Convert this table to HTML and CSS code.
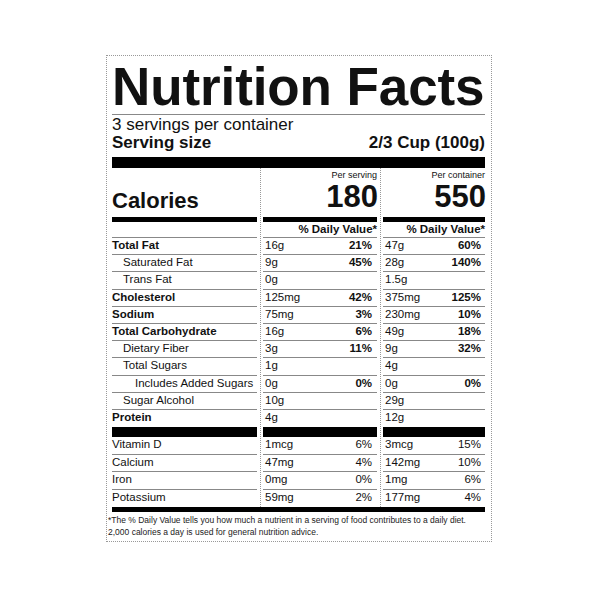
FILE: index.html
```html
<!DOCTYPE html>
<html lang="en">
<head>
  <meta charset="UTF-8">
  <title>Nutrition Facts</title>
  <link rel="stylesheet" href="styles.css">
</head>
<body>
<div class="label">
  <h1 class="title">Nutrition Facts</h1>
  <div class="servings">3 servings per container</div>
  <div class="serving-size"><span>Serving size</span><span>2/3 Cup (100g)</span></div>
  <div class="bar-top"></div>

  <div class="grid">
    <div class="sep sep-a"></div>
    <div class="sep sep-b"></div>

    <!-- calories -->
    <div class="cell c1 cal-name">Calories</div>
    <div class="cell c2 cal"><span class="per">Per serving</span><span class="num">180</span></div>
    <div class="cell c3 cal"><span class="per">Per container</span><span class="num">550</span></div>

    <div class="cell c1 dv"></div>
    <div class="cell c2 dv">% Daily Value*</div>
    <div class="cell c3 dv">% Daily Value*</div>

    <div class="cell c1 b">Total Fat</div>
    <div class="cell c2"><span>16g</span><b>21%</b></div>
    <div class="cell c3"><span>47g</span><b>60%</b></div>

    <div class="cell c1 in1">Saturated Fat</div>
    <div class="cell c2"><span>9g</span><b>45%</b></div>
    <div class="cell c3"><span>28g</span><b>140%</b></div>

    <div class="cell c1 in1">Trans Fat</div>
    <div class="cell c2"><span>0g</span></div>
    <div class="cell c3"><span>1.5g</span></div>

    <div class="cell c1 b">Cholesterol</div>
    <div class="cell c2"><span>125mg</span><b>42%</b></div>
    <div class="cell c3"><span>375mg</span><b>125%</b></div>

    <div class="cell c1 b">Sodium</div>
    <div class="cell c2"><span>75mg</span><b>3%</b></div>
    <div class="cell c3"><span>230mg</span><b>10%</b></div>

    <div class="cell c1 b">Total Carbohydrate</div>
    <div class="cell c2"><span>16g</span><b>6%</b></div>
    <div class="cell c3"><span>49g</span><b>18%</b></div>

    <div class="cell c1 in1">Dietary Fiber</div>
    <div class="cell c2"><span>3g</span><b>11%</b></div>
    <div class="cell c3"><span>9g</span><b>32%</b></div>

    <div class="cell c1 in1">Total Sugars</div>
    <div class="cell c2"><span>1g</span></div>
    <div class="cell c3"><span>4g</span></div>

    <div class="cell c1 in2">Includes Added Sugars</div>
    <div class="cell c2"><span>0g</span><b>0%</b></div>
    <div class="cell c3"><span>0g</span><b>0%</b></div>

    <div class="cell c1 in1">Sugar Alcohol</div>
    <div class="cell c2"><span>10g</span></div>
    <div class="cell c3"><span>29g</span></div>

    <div class="cell c1 b last">Protein</div>
    <div class="cell c2 last"><span>4g</span></div>
    <div class="cell c3 last"><span>12g</span></div>

    <div class="cell c1 bar"></div>
    <div class="cell c2 bar"></div>
    <div class="cell c3 bar"></div>

    <div class="cell c1">Vitamin D</div>
    <div class="cell c2"><span>1mcg</span><span>6%</span></div>
    <div class="cell c3"><span>3mcg</span><span>15%</span></div>

    <div class="cell c1">Calcium</div>
    <div class="cell c2"><span>47mg</span><span>4%</span></div>
    <div class="cell c3"><span>142mg</span><span>10%</span></div>

    <div class="cell c1">Iron</div>
    <div class="cell c2"><span>0mg</span><span>0%</span></div>
    <div class="cell c3"><span>1mg</span><span>6%</span></div>

    <div class="cell c1 last">Potassium</div>
    <div class="cell c2 last"><span>59mg</span><span>2%</span></div>
    <div class="cell c3 last"><span>177mg</span><span>4%</span></div>
  </div>

  <div class="bar-bottom"></div>
  <p class="note">*The % Daily Value tells you how much a nutrient in a serving of food contributes to a daily diet.<br>2,000 calories a day is used for general nutrition advice.</p>
</div>
</body>
</html>
```

FILE: styles.css
```css
body {
  margin: 0;
  background-color: #fff;
  color: #111;
  font-family: "Liberation Sans", Arial, sans-serif;
}

.label {
  box-sizing: border-box;
  width: 386px;
  margin: 55px 0 0 106px;
  padding: 4px 6px 3px 5px;
  border: 1px dotted #999;
}

.title {
  margin: 0;
  height: 54px;
  font-size: 53px;
  line-height: 53px;
  font-weight: bold;
  letter-spacing: -0.1px;
  white-space: nowrap;
  border-bottom: 1px solid #888;
}

.servings,
.serving-size {
  font-size: 17px;
  line-height: 18px;
}

.servings {
  margin-top: 1px;
}

.serving-size {
  display: flex;
  justify-content: space-between;
  font-weight: bold;
}

.bar-top {
  height: 11px;
  margin-top: 5px;
  background-color: #000;
}

.grid {
  display: grid;
  grid-template-columns: 145px 6px 114px 6px 102px;
  grid-template-rows: 54px 16px repeat(11, 17.2px) 10px repeat(4, 17.5px);
  font-size: 11.5px;
  line-height: 14px;
}

.sep {
  grid-row: 1 / -1;
  justify-self: center;
  border-left: 1px dotted #999;
}

.sep-a { grid-column: 2; }
.sep-b { grid-column: 4; }

.cell {
  box-sizing: border-box;
  border-bottom: 1px solid #888;
  white-space: nowrap;
}

.c1 { grid-column: 1; }

.c2,
.c3 {
  display: flex;
  justify-content: space-between;
  padding-left: 2px;
}

.c2 {
  grid-column: 3;
  padding-right: 5px;
}

.c3 {
  grid-column: 5;
  padding-right: 4px;
}

.b { font-weight: bold; }
.in1 { padding-left: 11px; }
.in2 { padding-left: 23px; }

.last { border-bottom: none; }

.cal-name {
  display: flex;
  align-items: flex-end;
  padding-bottom: 5px;
  font-size: 22px;
  line-height: 22px;
  font-weight: bold;
  border-bottom: 5px solid #000;
}

.cal {
  flex-direction: column;
  align-items: flex-end;
  justify-content: flex-start;
  padding-right: 0;
  border-bottom: 5px solid #000;
}

.c3.cal { padding-right: 0; }

.per {
  margin-top: 2px;
  font-size: 9px;
  line-height: 10px;
}

.num {
  margin-top: 3px;
  margin-right: -1px;
  font-size: 31px;
  line-height: 28px;
  font-weight: bold;
}

.dv {
  justify-content: flex-end;
  padding-right: 0;
  font-weight: bold;
}

.bar {
  background-color: #000;
  border-bottom: none;
}

.bar-bottom {
  height: 5px;
  background-color: #000;
}

.note {
  margin: 2px 0 0 -4px;
  font-size: 8.5px;
  line-height: 12px;
  color: #222;
  white-space: nowrap;
}
```
